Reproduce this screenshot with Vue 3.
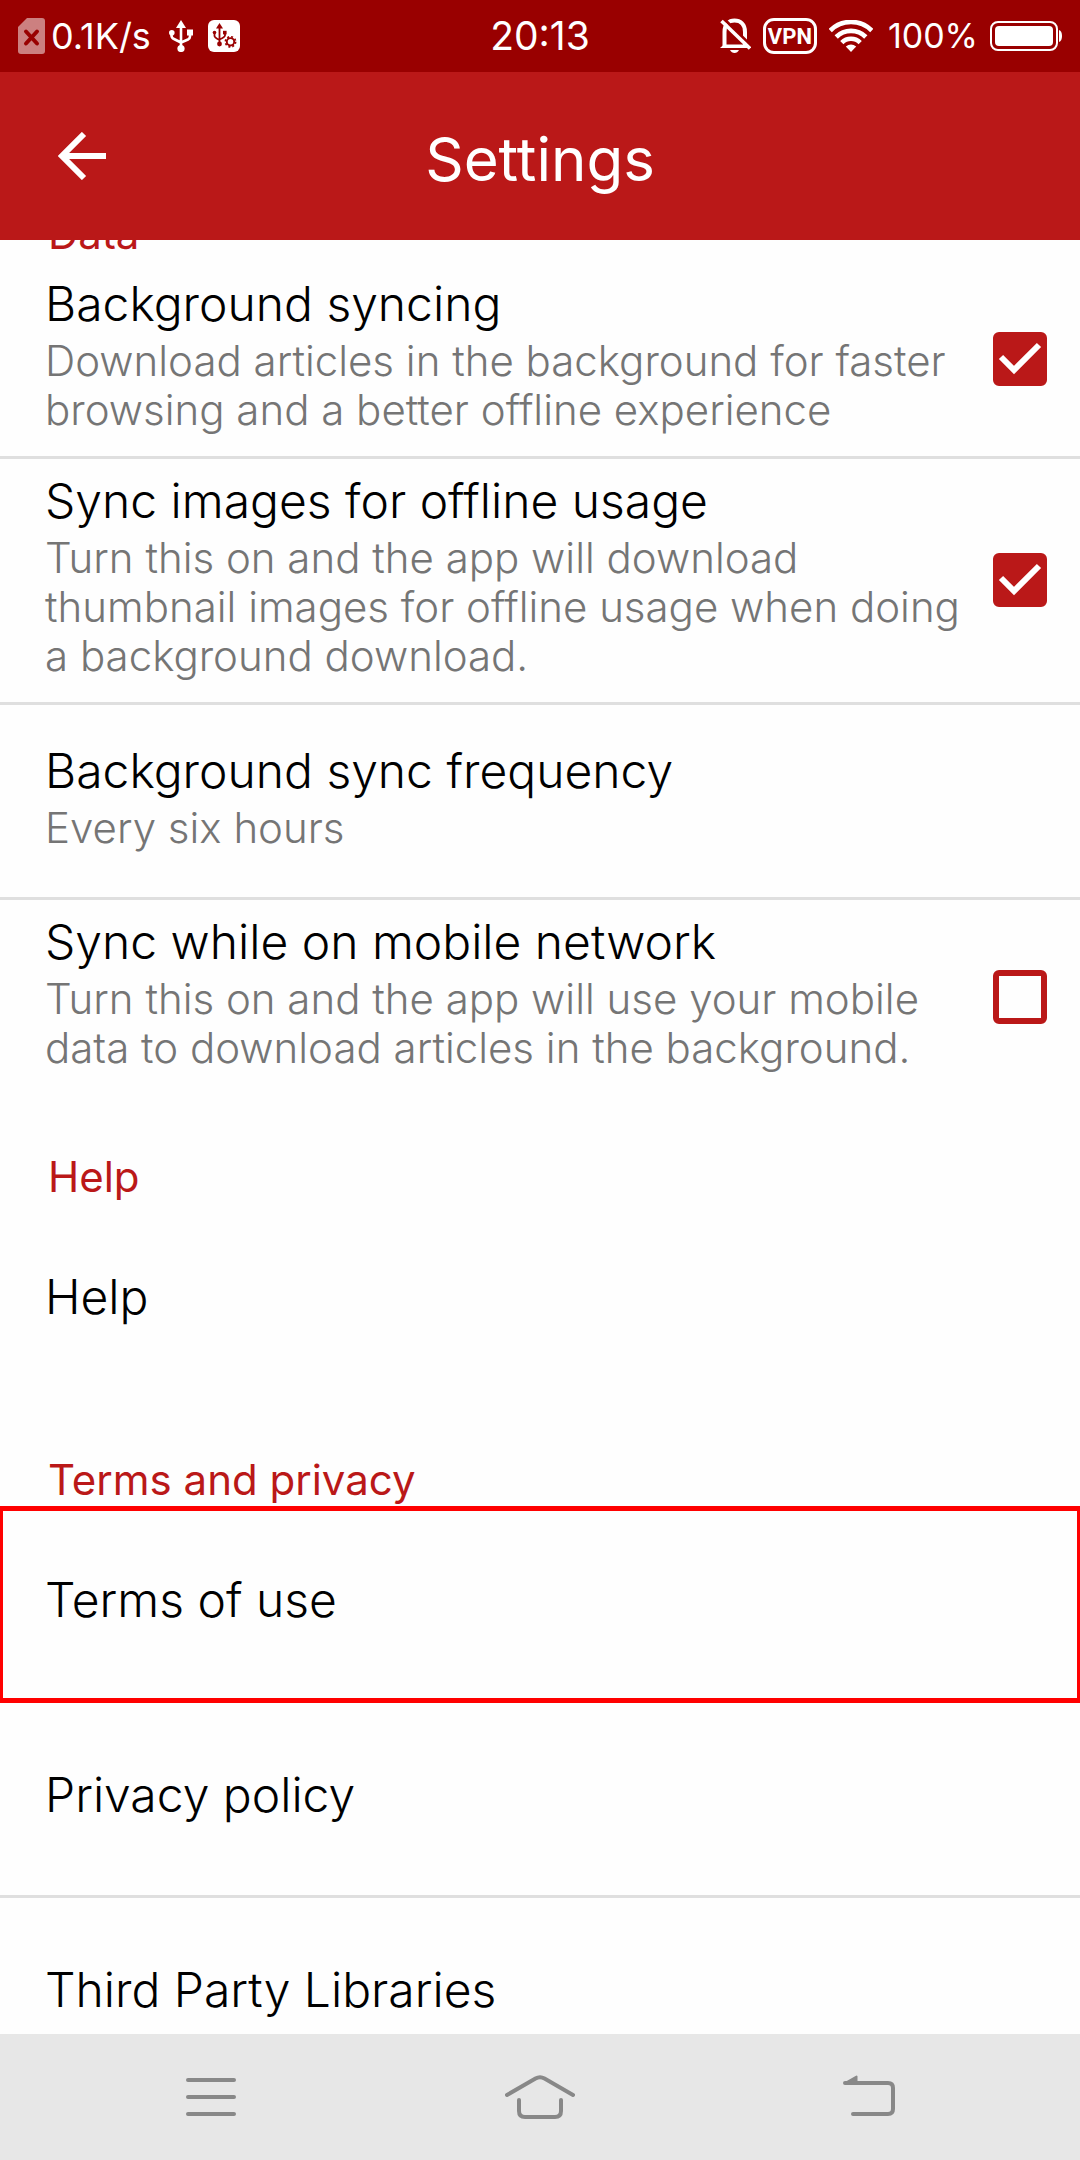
<script setup>
import { onMounted, ref } from 'vue'

const list = ref(null)

const sections = ref([
  {
    title: 'Data',
    items: [
      {
        id: 'background-sync',
        type: 'toggle',
        title: 'Background syncing',
        summary: 'Download articles in the background for faster browsing and a better offline experience',
        checked: true,
      },
      {
        id: 'sync-images',
        type: 'toggle',
        title: 'Sync images for offline usage',
        summary:
          'Turn this on and the app will download thumbnail images for offline usage when doing a background download.',
        checked: true,
      },
      { id: 'frequency', type: 'choice', title: 'Background sync frequency', summary: 'Every six hours' },
      {
        id: 'mobile-network',
        type: 'toggle',
        title: 'Sync while on mobile network',
        summary: 'Turn this on and the app will use your mobile data to download articles in the background.',
        checked: false,
      },
    ],
  },
  { title: 'Help', items: [{ id: 'help', type: 'link', title: 'Help' }] },
  {
    title: 'Terms and privacy',
    items: [
      { id: 'terms', type: 'link', title: 'Terms of use', highlighted: true },
      { id: 'privacy', type: 'link', title: 'Privacy policy' },
      { id: 'libraries', type: 'link', title: 'Third Party Libraries' },
    ],
  },
])

// The list opens scrolled past the first heading.
onMounted(() => {
  list.value.scrollTop = 89
})
</script>

<template>
  <div class="screen">
    <div class="status">
      <div class="status-group status-left">
        <svg class="sim" width="27" height="36" viewBox="0 0 27 36">
          <path d="M9 0H24a3 3 0 0 1 3 3V33a3 3 0 0 1-3 3H3a3 3 0 0 1-3-3V9Z" fill="#cc8080" />
          <path d="M8 13.500L19 25.500M19 13.500L8 25.500" stroke="#990000" stroke-width="4" stroke-linecap="round" />
        </svg>
        <span class="speed">0.1K/s</span>
        <svg class="usb" width="24" height="32" viewBox="0 0 24 32" fill="none">
          <path d="M12 6V28M2.500 13V15.500Q2.500 18 5 19L12 22.500M21 12V16.500Q21 18.500 19 19.500L12 22.500" stroke="#fff" stroke-width="2.600" />
          <path d="M12 0L17 8H7Z" fill="#fff" />
          <circle cx="12" cy="28.500" r="3.600" fill="#fff" />
          <circle cx="2.800" cy="12.800" r="2.800" fill="#fff" />
          <rect x="18" y="9.500" width="6" height="6" fill="#fff" />
        </svg>
        <svg width="32" height="32" viewBox="0 0 32 32" fill="none">
          <rect width="32" height="32" rx="6" fill="#fff" />
          <path d="M11.500 6V24M6.500 13V16Q6.500 17.500 11.500 20M17 13V15.500Q17 17 11.500 19.500" stroke="#990000" stroke-width="1.800" />
          <path d="M11.500 3L15 8.500H8Z" fill="#990000" />
          <circle cx="11.500" cy="24" r="2.400" fill="#990000" />
          <circle cx="6.500" cy="12.500" r="1.800" fill="#990000" />
          <rect x="15" y="10.800" width="3.600" height="3.600" fill="#990000" />
          <circle cx="22.500" cy="21.800" r="5.600" fill="#fff" />
          <circle cx="22.500" cy="21.800" r="3.700" stroke="#990000" stroke-width="1.900" />
          <circle cx="22.500" cy="21.800" r="5.100" stroke="#990000" stroke-width="1.700" stroke-dasharray="2 2.005" />
        </svg>
      </div>
      <time class="clock">20:13</time>
      <div class="status-group status-right">
        <svg width="31" height="36" viewBox="0 0 31 36" fill="none">
          <path d="M4.500 29V14C4.500 6 9 2.500 14.500 2.500S25 6 25 14V29" stroke="#fff" stroke-width="4" />
          <path d="M0 30L4 26.500H25L29 30Z" fill="#fff" />
          <path d="M10 32H19Q17.500 35 14.500 35T10 32Z" fill="#fff" />
          <path d="M3.500 0.500L31 27.500" stroke="#990000" stroke-width="3" />
          <path d="M1.500 3L30 30.500" stroke="#fff" stroke-width="3.600" />
        </svg>
        <span class="vpn">VPN</span>
        <svg width="44" height="32" viewBox="0 0 44 32" fill="none">
          <path d="M1.200 10.500A29.500 29.500 0 0 1 42.800 10.500" stroke="#fff" stroke-width="4.600" />
          <path d="M7.200 17A21 21 0 0 1 36.800 17" stroke="#fff" stroke-width="4.600" />
          <path d="M12.800 22.500A13 13 0 0 1 31.200 22.500" stroke="#fff" stroke-width="4.600" />
          <path d="M22 32L16.800 26.500Q22 22.500 27.200 26.500Z" fill="#fff" />
        </svg>
        <span class="level">100%</span>
        <svg width="72" height="30" viewBox="0 0 72 30" fill="none">
          <rect x="1" y="1" width="66" height="28" rx="7" stroke="#fff" stroke-width="2" />
          <rect x="5" y="5" width="58" height="20" rx="4" fill="#fff" />
          <path d="M69 9Q72 10 72 15T69 21Z" fill="#fff" />
        </svg>
      </div>
    </div>

    <header class="bar">
      <button class="back" type="button" aria-label="Back">
        <svg width="48" height="48" viewBox="0 0 48 48" fill="none" stroke="#fff" stroke-width="6">
          <path d="M48 24H5M26 2L4 24L26 46" />
        </svg>
      </button>
      <h1>Settings</h1>
    </header>

    <main ref="list" class="list">
      <section v-for="section in sections" :key="section.title">
        <h2>{{ section.title }}</h2>
        <template v-for="item in section.items" :key="item.id">
          <label v-if="item.type === 'toggle'" class="row" :for="item.id">
            <span class="text">
              <span class="title">{{ item.title }}</span>
              <span class="summary">{{ item.summary }}</span>
            </span>
            <span class="box">
              <input :id="item.id" v-model="item.checked" type="checkbox" />
              <svg v-if="item.checked" width="54" height="54" viewBox="0 0 54 54" fill="none">
                <path d="M8 25L21 38L46 13" stroke="#fff" stroke-width="6" />
              </svg>
            </span>
          </label>
          <button v-else-if="item.type === 'choice'" class="row" type="button">
            <span class="text">
              <span class="title">{{ item.title }}</span>
              <span class="summary">{{ item.summary }}</span>
            </span>
          </button>
          <a v-else class="row single" :class="{ highlighted: item.highlighted }" :href="'#' + item.id">
            <span class="title">{{ item.title }}</span>
          </a>
        </template>
      </section>
    </main>

    <nav class="nav">
      <button type="button" aria-label="Menu">
        <svg width="50" height="44" viewBox="0 0 50 44">
          <path d="M2 5H48M2 22H48M2 39H48" />
        </svg>
      </button>
      <button type="button" aria-label="Home">
        <svg width="70" height="44" viewBox="0 0 70 44">
          <path d="M2 20L30.500 3.500Q35 1 39.500 3.500L68 20M14 25V36Q14 42 20 42H50Q56 42 56 36V25" />
        </svg>
      </button>
      <button type="button" aria-label="Previous">
        <svg width="52" height="44" viewBox="0 0 52 44">
          <path d="M2 8H45Q50 8 50 13V34Q50 39 45 39H10" />
          <path d="M2 8L13.500 1.500V8Z" fill="#888" stroke-width="2" />
        </svg>
      </button>
    </nav>
  </div>
</template>

<style>
body {
  margin: 0;
}
</style>

<style scoped>
.screen {
  display: flex;
  flex-direction: column;
  height: 100vh;
  background: #fefefe;
  color: #000;
  font-family: Inter, Roboto, sans-serif;
  font-weight: 300;
}
.status {
  display: grid;
  grid-template-columns: 1fr auto 1fr;
  align-items: center;
  height: 72px;
  padding: 0 18px;
  box-sizing: border-box;
  background: #990000;
  color: #fff;
  font-size: 34px;
  line-height: 72px;
  font-weight: 400;
}
.status-group {
  display: flex;
  align-items: center;
}
.status-right {
  justify-content: flex-end;
  gap: 12px;
}
.speed {
  padding: 0 18px 0 6px;
  font-size: 36px;
}
.usb {
  margin-right: 15px;
}
.clock {
  font-size: 39px;
}
.level {
  padding-left: 3px;
}
.vpn {
  width: 54px;
  height: 36px;
  box-sizing: border-box;
  border: 3px solid #fff;
  border-radius: 11px;
  font: bold 22px/31px Roboto, sans-serif;
  text-align: center;
}
.bar {
  display: grid;
  grid-template-columns: 1fr auto 1fr;
  align-items: center;
  height: 168px;
  background: #ba1818;
  color: #fff;
}
.back {
  justify-self: start;
  display: flex;
  padding: 24px 58px;
  border: 0;
  background: none;
}
h1 {
  margin: 0;
  padding-top: 6px;
  font-size: 60px;
  line-height: 72px;
  font-weight: 400;
}
.list {
  flex: 1;
  min-height: 0;
  overflow-y: auto;
  scrollbar-width: none;
}
h2 {
  margin: 0;
  padding: 59px 48px 4px;
  color: #ba1818;
  font-size: 42px;
  line-height: 48px;
  font-weight: 400;
}
.row {
  position: relative;
  display: flex;
  align-items: center;
  width: 100%;
  min-height: 195px;
  box-sizing: border-box;
  padding: 16px 33px 22px 45px;
  border: 0;
  border-bottom: 3px solid #dfdfdf;
  background: none;
  color: inherit;
  font: inherit;
  text-align: left;
  text-decoration: none;
}
.row:last-child {
  border-bottom: 0;
  min-height: 192px;
}
.single {
  padding-bottom: 24px;
}
.highlighted::after {
  content: '';
  position: absolute;
  inset: -2px 0 -3px;
  border: solid #ff0000;
  border-width: 5px 3px;
}
.text {
  flex: 1;
  display: flex;
  flex-direction: column;
  gap: 6px;
}
.title {
  font-size: 48px;
  line-height: 52px;
}
.summary {
  color: #757575;
  font-size: 42px;
  line-height: 49px;
}
.box {
  position: relative;
  flex: none;
  width: 54px;
  height: 54px;
  margin: 5px 0 0 33px;
}
.box input {
  appearance: none;
  display: block;
  width: 54px;
  height: 54px;
  margin: 0;
  border: 6px solid #ba1818;
  border-radius: 6px;
}
.box input:checked {
  background: #ba1818;
}
.box svg {
  position: absolute;
  inset: 0;
  pointer-events: none;
}
.nav {
  display: grid;
  grid-template-columns: repeat(3, 1fr);
  height: 126px;
  padding: 0 46px;
  background: #e7e7e7;
}
.nav button {
  display: flex;
  align-items: center;
  justify-content: center;
  padding: 0;
  border: 0;
  background: none;
}
.nav svg {
  fill: none;
  stroke: #888;
  stroke-width: 4;
  stroke-linecap: round;
  stroke-linejoin: round;
}
</style>
